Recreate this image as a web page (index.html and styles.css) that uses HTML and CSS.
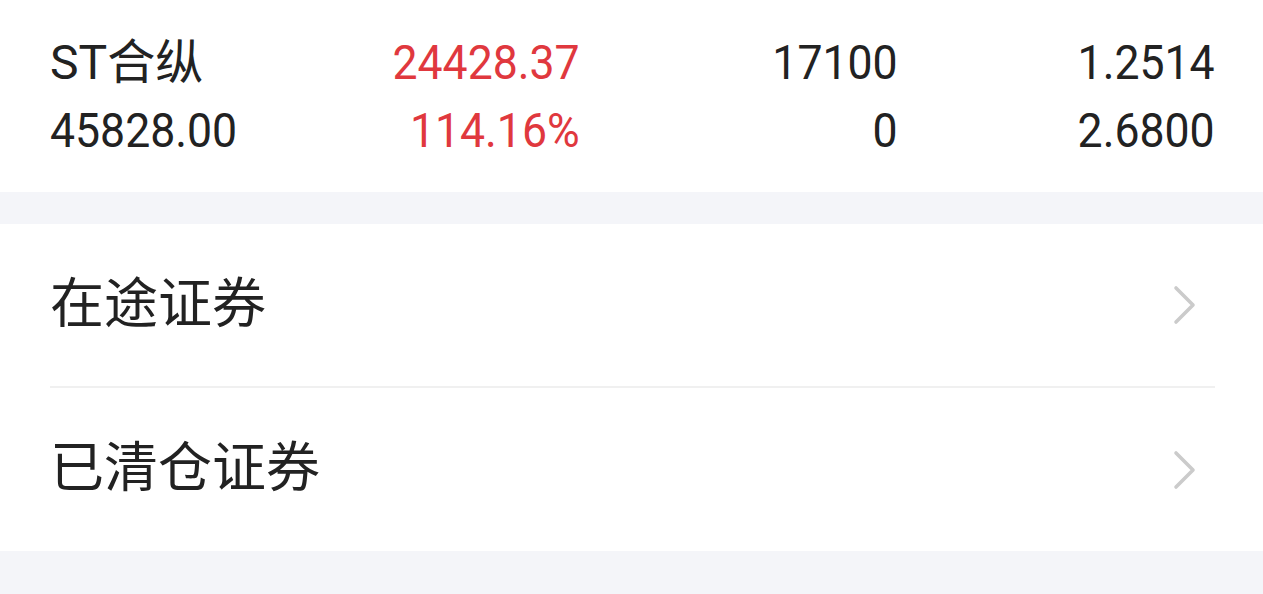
FILE: index.html
```html
<!DOCTYPE html>
<html lang="zh-CN">
<head>
    <meta charset="UTF-8">
    <meta name="viewport" content="width=device-width, initial-scale=1.0">
    <title>持仓</title>
    <link rel="stylesheet" href="styles.css">
</head>
<body>
    <section class="holding">
        <div class="cell name">ST合纵</div>
        <div class="cell num up">24428.37</div>
        <div class="cell num">17100</div>
        <div class="cell num">1.2514</div>
        <div class="cell name digits">45828.00</div>
        <div class="cell num up">114.16%</div>
        <div class="cell num">0</div>
        <div class="cell num">2.6800</div>
    </section>

    <div class="gap"></div>

    <ul class="menu">
        <li class="menu_item">
            <span class="label">在途证券</span>
            <svg class="arrow" width="24" height="40" viewBox="0 0 24 40">
                <path d="M3 3 L20 20 L3 37" fill="none" stroke="#cbcbcb" stroke-width="3.6" stroke-linecap="round" stroke-linejoin="round"/>
            </svg>
        </li>
        <li class="menu_item">
            <span class="label">已清仓证券</span>
            <svg class="arrow" width="24" height="40" viewBox="0 0 24 40">
                <path d="M3 3 L20 20 L3 37" fill="none" stroke="#cbcbcb" stroke-width="3.6" stroke-linecap="round" stroke-linejoin="round"/>
            </svg>
        </li>
    </ul>

    <div class="gap bottom"></div>
</body>
</html>
```

FILE: styles.css
```css
body {
    margin: 0;
    background: #ffffff;
    font-family: Roboto, "Noto Sans CJK SC", sans-serif;
    color: #222222;
}
.holding {
    display: grid;
    grid-template-columns: 212px repeat(3, 1fr);
    padding: 29px 48px 27px 50px;
    font-size: 48px;
    line-height: 68px;
}
.cell {
    white-space: nowrap;
}
/* the app's number font is narrower than Roboto */
.digits {
    font-size: 49px;
    transform: scaleX(0.91);
    transform-origin: left center;
}
.num {
    text-align: right;
    font-size: 49px;
    transform: scaleX(0.91);
    transform-origin: right center;
}
.up {
    color: #e0383e;
}
.gap {
    height: 32px;
    background: #f4f5f9;
}
.gap.bottom {
    height: 46px;
}
.menu {
    list-style: none;
    margin: 0;
    padding: 0;
}
.menu_item {
    display: flex;
    align-items: center;
    justify-content: space-between;
    height: 162px;
    margin: 0 48px 0 50px;
    font-size: 54px;
    font-family: "Noto Sans CJK SC", sans-serif;
}
.menu_item + .menu_item {
    border-top: 2px solid #f0f0f0;
    height: 163px;
}
.label {
    margin-bottom: 12px;
}
.arrow {
    margin-right: 18px;
}
```
